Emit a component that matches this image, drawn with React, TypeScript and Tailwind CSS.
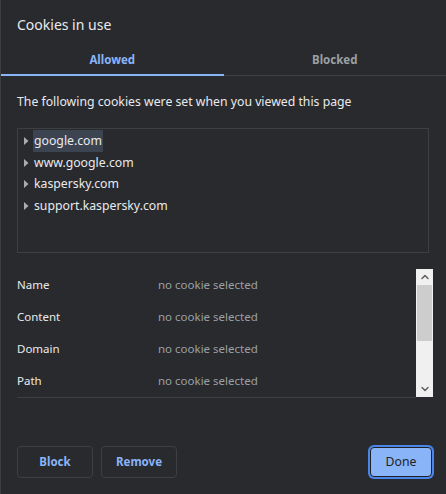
import { ChevronDown, ChevronUp } from "lucide-react"

const sites = ["google.com", "www.google.com", "kaspersky.com", "support.kaspersky.com"]
const fields = ["Name", "Content", "Domain", "Path"]

function Caret() {
  return (
    <svg width="6" height="10" viewBox="0 0 6 10" className="shrink-0">
      <path d="M1 1 L5.5 5 L1 9 Z" fill="#a8abb0" />
    </svg>
  )
}

export default function App() {
  return (
    <div
      className="w-[446px] h-[494px] bg-[#292a2d] text-[#e8eaed] flex flex-col border-l border-[#3c3d40]"
      style={{ fontFamily: "'Noto Sans', 'Open Sans', sans-serif" }}
    >
      {/* Title */}
      <div className="px-4 pt-[15px] h-[44px] text-[14px] leading-5">Cookies in use</div>

      {/* Tabs */}
      <div className="flex border-b border-[#3c4043] h-[32px]">
        <div className="flex-1 flex items-center justify-center pt-[1px] text-[11.5px] font-bold text-[#8ab4f8] border-b-2 border-[#8ab4f8] -mb-px">
          Allowed
        </div>
        <div className="flex-1 flex items-center justify-center pt-[1px] text-[11.5px] font-bold text-[#9aa0a6]">
          Blocked
        </div>
      </div>

      <div className="px-4 pt-[16px] text-[12.25px] leading-5">The following cookies were set when you viewed this page</div>

      {/* Site tree */}
      <div className="mx-4 mt-[16px] h-[125px] border border-[#3c4043] pt-[1px] pl-[5px] w-[412px]">
        {sites.map((s, i) => (
          <div key={s} className="flex items-center h-[21.7px] gap-[4px]">
            <Caret />
            <span className={`text-[12.25px] leading-[22px] px-[1px] ${i === 0 ? "bg-[#3c4452]" : ""}`}>
              {s}
            </span>
          </div>
        ))}
      </div>

      {/* Cookie details */}
      <div className="flex ml-4 mt-[16px] w-[416px] h-[129px]">
        <div className="flex-1 flex flex-col border-b border-[#3c4043]">
          {fields.map((f) => (
            <div key={f} className="flex items-center h-[32px] text-[11.5px]">
              <span className="w-[141px]">{f}</span>
              <span className="text-[#9aa0a6]">no cookie selected</span>
            </div>
          ))}
        </div>
        <div className="w-[17px] h-[128px] bg-[#f0f0f0] flex flex-col items-center">
          <ChevronUp className="w-3 h-3 mt-[2px] text-[#606060]" strokeWidth={3} />
          <div className="w-[15px] h-[56px] bg-[#cdcdcd] mt-[2px]" />
          <div className="flex-1" />
          <ChevronDown className="w-3 h-3 mb-[2px] text-[#606060]" strokeWidth={3} />
        </div>
      </div>

      {/* Buttons */}
      <div className="flex items-center mt-auto mb-[16px] pl-4 pr-[14px] gap-[8px]">
        <button className="w-[76px] h-[32px] rounded border border-[#3c4043] text-[11.5px] font-bold text-[#8ab4f8]">
          Block
        </button>
        <button className="w-[76px] h-[32px] rounded border border-[#3c4043] text-[11.5px] font-bold text-[#8ab4f8]">
          Remove
        </button>
        <button className="ml-auto w-[62px] h-[30px] rounded bg-[#8ab4f8] text-[12.25px] text-[#202124] border border-[#202124] ring-2 ring-[#4a86ea]">
          Done
        </button>
      </div>
    </div>
  )
}
